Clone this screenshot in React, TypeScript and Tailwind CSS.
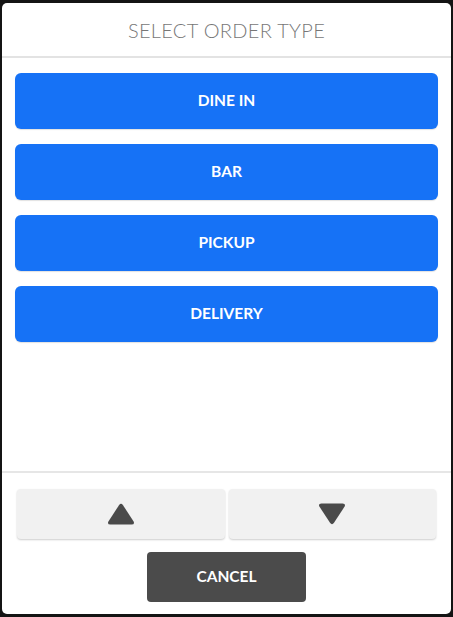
import React from 'react';

const orderTypes = ['DINE IN', 'BAR', 'PICKUP', 'DELIVERY'];

const Triangle = ({ down }: { down?: boolean }) => (
  <svg width="30" height="24" viewBox="0 0 30 24" className={down ? 'rotate-180' : ''}>
    <path
      d="M13 3.2 Q15 0.5 17 3.2 L27.6 19.4 Q29 22.5 25.6 22.5 L4.4 22.5 Q1 22.5 2.4 19.4 Z"
      fill="#4a4a4a"
    />
  </svg>
);

const App = () => {
  return (
    <div className="w-[453px] h-[617px] bg-[#141414] p-[2px] pt-[3px] pb-[3px] font-['Lato',sans-serif]">
      <div className="flex h-full flex-col rounded-[5px] bg-white">
        <div className="flex h-[55px] items-center justify-center border-b-2 border-[#e3e3e3]">
          <h1 className="pt-[1px] text-[20px] font-light tracking-[0.3px] text-[#777777]">SELECT ORDER TYPE</h1>
        </div>

        <div className="flex flex-1 flex-col gap-[15px] px-[13px] pt-[15px]">
          {orderTypes.map((type) => (
            <button
              key={type}
              className="flex h-[56px] w-full items-center justify-center rounded-[6px] bg-[#1672f6] text-[15.5px] font-bold text-white shadow-[0_1px_1px_rgba(0,0,0,0.12)]"
            >
              {type}
            </button>
          ))}
        </div>

        <div className="border-t-2 border-[#e6e6e6] px-[14px] pt-[16px] pb-[12px]">
          <div className="flex gap-[4px] px-[1px]">
            <button className="flex h-[50px] flex-1 items-center justify-center rounded-[4px] bg-[#f1f1f1] shadow-[0_1px_2px_rgba(0,0,0,0.2)]">
              <Triangle />
            </button>
            <button className="flex h-[50px] flex-1 items-center justify-center rounded-[4px] bg-[#f1f1f1] shadow-[0_1px_2px_rgba(0,0,0,0.2)]">
              <Triangle down />
            </button>
          </div>
          <div className="mt-[13px] flex justify-center">
            <button className="h-[50px] w-[159px] rounded-[4px] bg-[#4b4b4b] text-[15.5px] font-bold text-white">
              CANCEL
            </button>
          </div>
        </div>
      </div>
    </div>
  );
};

export default App;
